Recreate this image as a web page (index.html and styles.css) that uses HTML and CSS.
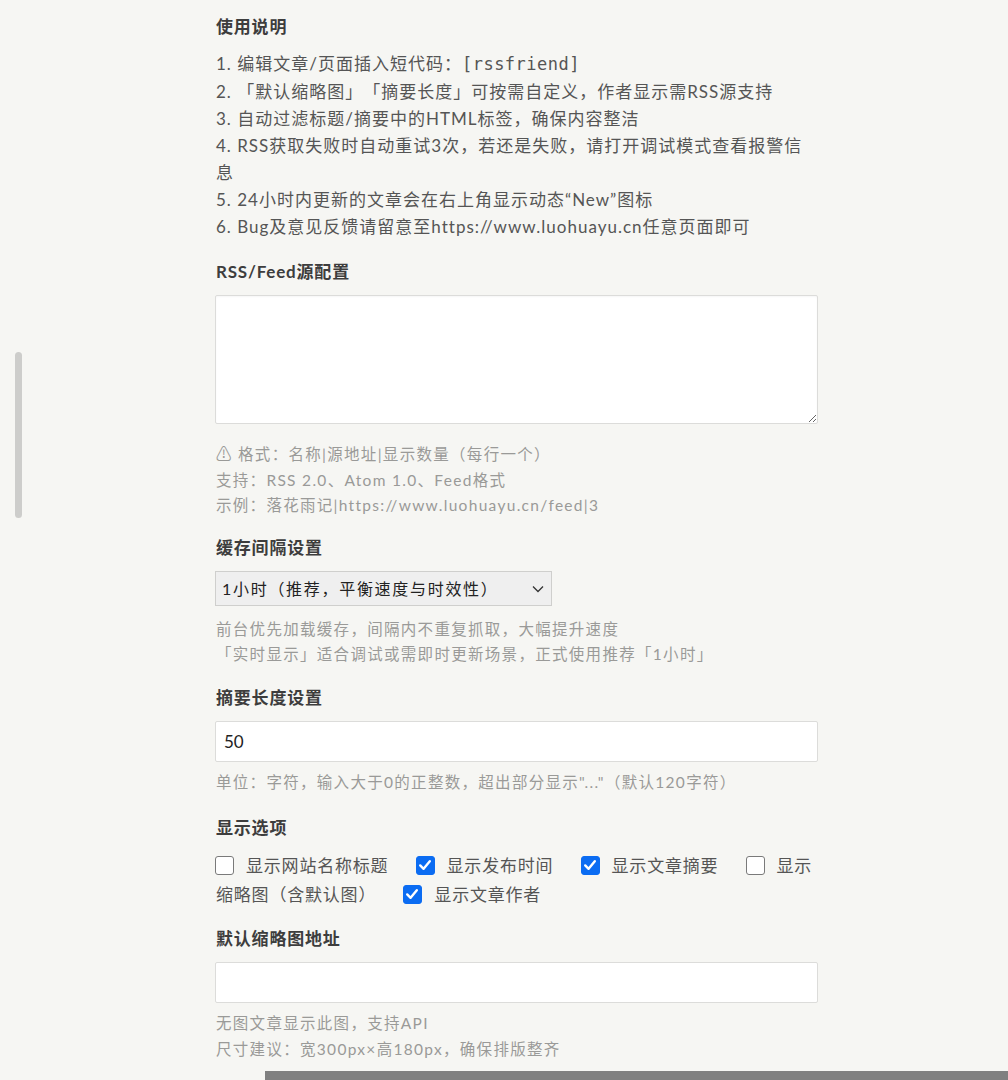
FILE: index.html
```html
<!DOCTYPE html>
<html lang="zh-CN">
<head>
<meta charset="utf-8">
<title>RSS Friend 设置</title>
<link rel="stylesheet" href="styles.css">
</head>
<body>
<div class="scrollbar"></div>
<main class="panel">
  <section class="sec sec-usage">
    <h3 class="title">使用说明</h3>
    <div class="usage">
      <p>1. 编辑文章/页面插入短代码：<code>[rssfriend]</code></p>
      <p>2. 「默认缩略图」「摘要长度」可按需自定义，作者显示需RSS源支持</p>
      <p>3. 自动过滤标题/摘要中的HTML标签，确保内容整洁</p>
      <p>4. RSS获取失败时自动重试3次，若还是失败，请打开调试模式查看报警信息</p>
      <p>5. 24小时内更新的文章会在右上角显示动态“New”图标</p>
      <p>6. Bug及意见反馈请留意至https://www.luohuayu.cn任意页面即可</p>
    </div>
  </section>

  <section class="sec sec-feed">
    <h3 class="title">RSS/Feed源配置</h3>
    <textarea class="area"></textarea>
    <div class="help help-area">
      <p>⚠ 格式：名称|源地址|显示数量（每行一个）</p>
      <p>支持：RSS 2.0、Atom 1.0、Feed格式</p>
      <p>示例：落花雨记|https://www.luohuayu.cn/feed|3</p>
    </div>
  </section>

  <section class="sec sec-cache">
    <h3 class="title">缓存间隔设置</h3>
    <div class="select">
      <span class="select-text">1小时（推荐，平衡速度与时效性）</span>
      <svg class="chev" width="12" height="8" viewBox="0 0 12 8"><path d="M1 1.5 L6 6.5 L11 1.5" fill="none" stroke="#333" stroke-width="1.3"/></svg>
    </div>
    <div class="help help-select">
      <p>前台优先加载缓存，间隔内不重复抓取，大幅提升速度</p>
      <p>「实时显示」适合调试或需即时更新场景，正式使用推荐「1小时」</p>
    </div>
  </section>

  <section class="sec sec-len">
    <h3 class="title">摘要长度设置</h3>
    <div class="input"><span class="input-val">50</span></div>
    <div class="help help-input">
      <p>单位：字符，输入大于0的正整数，超出部分显示"..."（默认120字符）</p>
    </div>
  </section>

  <section class="sec sec-opts">
    <h3 class="title">显示选项</h3>
    <div class="opts">
      <label class="opt"><span class="cb"></span>显示网站名称标题</label>
      <label class="opt"><span class="cb on"><svg viewBox="0 0 18 18" width="18" height="18"><path d="M4.2 9.4 L7.6 12.8 L13.8 5.2" fill="none" stroke="#fff" stroke-width="2.4" stroke-linecap="round" stroke-linejoin="round"/></svg></span>显示发布时间</label>
      <label class="opt"><span class="cb on"><svg viewBox="0 0 18 18" width="18" height="18"><path d="M4.2 9.4 L7.6 12.8 L13.8 5.2" fill="none" stroke="#fff" stroke-width="2.4" stroke-linecap="round" stroke-linejoin="round"/></svg></span>显示文章摘要</label>
      <label class="opt"><span class="cb"></span>显示缩略图（含默认图）</label>
      <label class="opt"><span class="cb on"><svg viewBox="0 0 18 18" width="18" height="18"><path d="M4.2 9.4 L7.6 12.8 L13.8 5.2" fill="none" stroke="#fff" stroke-width="2.4" stroke-linecap="round" stroke-linejoin="round"/></svg></span>显示文章作者</label>
    </div>
  </section>

  <section class="sec sec-thumb">
    <h3 class="title">默认缩略图地址</h3>
    <div class="input"></div>
    <div class="help help-thumb">
      <p>无图文章显示此图，支持API</p>
      <p>尺寸建议：宽300px×高180px，确保排版整齐</p>
    </div>
  </section>
</main>
<div class="bottombar"></div>
</body>
</html>
```

FILE: styles.css
```css
html, body {
  margin: 0;
  padding: 0;
  background: #f6f6f3;
  height: 1080px;
  overflow: hidden;
}

body {
  font-family: "Lato", "Noto Sans CJK SC", "Noto Sans", sans-serif;
  color: #555;
  position: relative;
  text-spacing-trim: space-all;
}

.scrollbar {
  position: absolute;
  left: 15px;
  top: 352px;
  width: 7px;
  height: 166px;
  border-radius: 4px;
  background: #cdcdcb;
}

.panel {
  margin-left: 216px;
  width: 602px;
  padding-top: 15px;
}

.sec p {
  margin: 0;
}

.title {
  margin: 0 0 11px 0;
  font-size: 17px;
  line-height: 24px;
  font-weight: 700;
  color: #3d3d3d;
  letter-spacing: 0.8px;
}

.usage {
  font-size: 17px;
  line-height: 27px;
  letter-spacing: 1px;
  color: #555;
  margin-top: -0.5px;
}

.usage code {
  font-family: "DejaVu Sans Mono", "Liberation Mono", monospace;
  font-size: 17px;
  letter-spacing: 0.5px;
  color: #555;
}

.sec-feed { margin-top: 20px; }
.sec-cache { margin-top: 17px; }
.sec-len { margin-top: 18.5px; }
.sec-opts { margin-top: 20.5px; }
.sec-thumb { margin-top: 17.5px; }

.area {
  display: block;
  box-sizing: border-box;
  width: 603px;
  height: 129px;
  margin: 0 0 0 -1px;
  border: 1px solid #dcdcda;
  border-radius: 2px;
  background: #fff;
  box-shadow: inset 0 1px 2px rgba(0,0,0,0.04);
  resize: vertical;
  outline: none;
}

.help {
  font-size: 15.5px;
  line-height: 25.5px;
  letter-spacing: 1.3px;
  color: #9a9a98;
}

.help-area { margin-top: 18.5px; }
.help-select { margin-top: 11.5px; line-height: 25px; }
.help-input { margin-top: 8.5px; }
.help-thumb { margin-top: 7px; line-height: 26px; }

.select {
  box-sizing: border-box;
  width: 337px;
  height: 35px;
  margin-left: -1px;
  border: 1px solid #cfcfcd;
  background: #efefef;
  display: flex;
  align-items: center;
  justify-content: space-between;
  padding: 0 7px 0 6px;
}

.select-text {
  font-size: 16px;
  letter-spacing: 1.7px;
  color: #222;
}

.chev { display: block; margin-top: 1px; }

.input {
  box-sizing: border-box;
  width: 603px;
  height: 41px;
  margin-left: -1px;
  border: 1px solid #dcdcda;
  border-radius: 2px;
  background: #fff;
  display: flex;
  align-items: center;
  padding-left: 8px;
}

.input-val {
  font-size: 17px;
  color: #222;
}

.opts {
  margin-top: 7.5px;
  font-size: 17px;
  line-height: 29px;
  letter-spacing: 0.8px;
  color: #555;
}

.opt {
  margin-right: 23px;
}

.cb {
  display: inline-block;
  box-sizing: border-box;
  width: 19px;
  height: 19px;
  border: 1.5px solid #7a7a7a;
  border-radius: 3px;
  background: #fff;
  vertical-align: -3px;
  margin: 0 12px 0 -1px;
  position: relative;
}

.cb.on {
  background: #0b6cf2;
  border-color: #0b6cf2;
}

.cb svg {
  position: absolute;
  left: -1px;
  top: -1px;
}

.bottombar {
  position: absolute;
  left: 265px;
  right: 0;
  top: 1071px;
  height: 9px;
  background: #808080;
}
```
